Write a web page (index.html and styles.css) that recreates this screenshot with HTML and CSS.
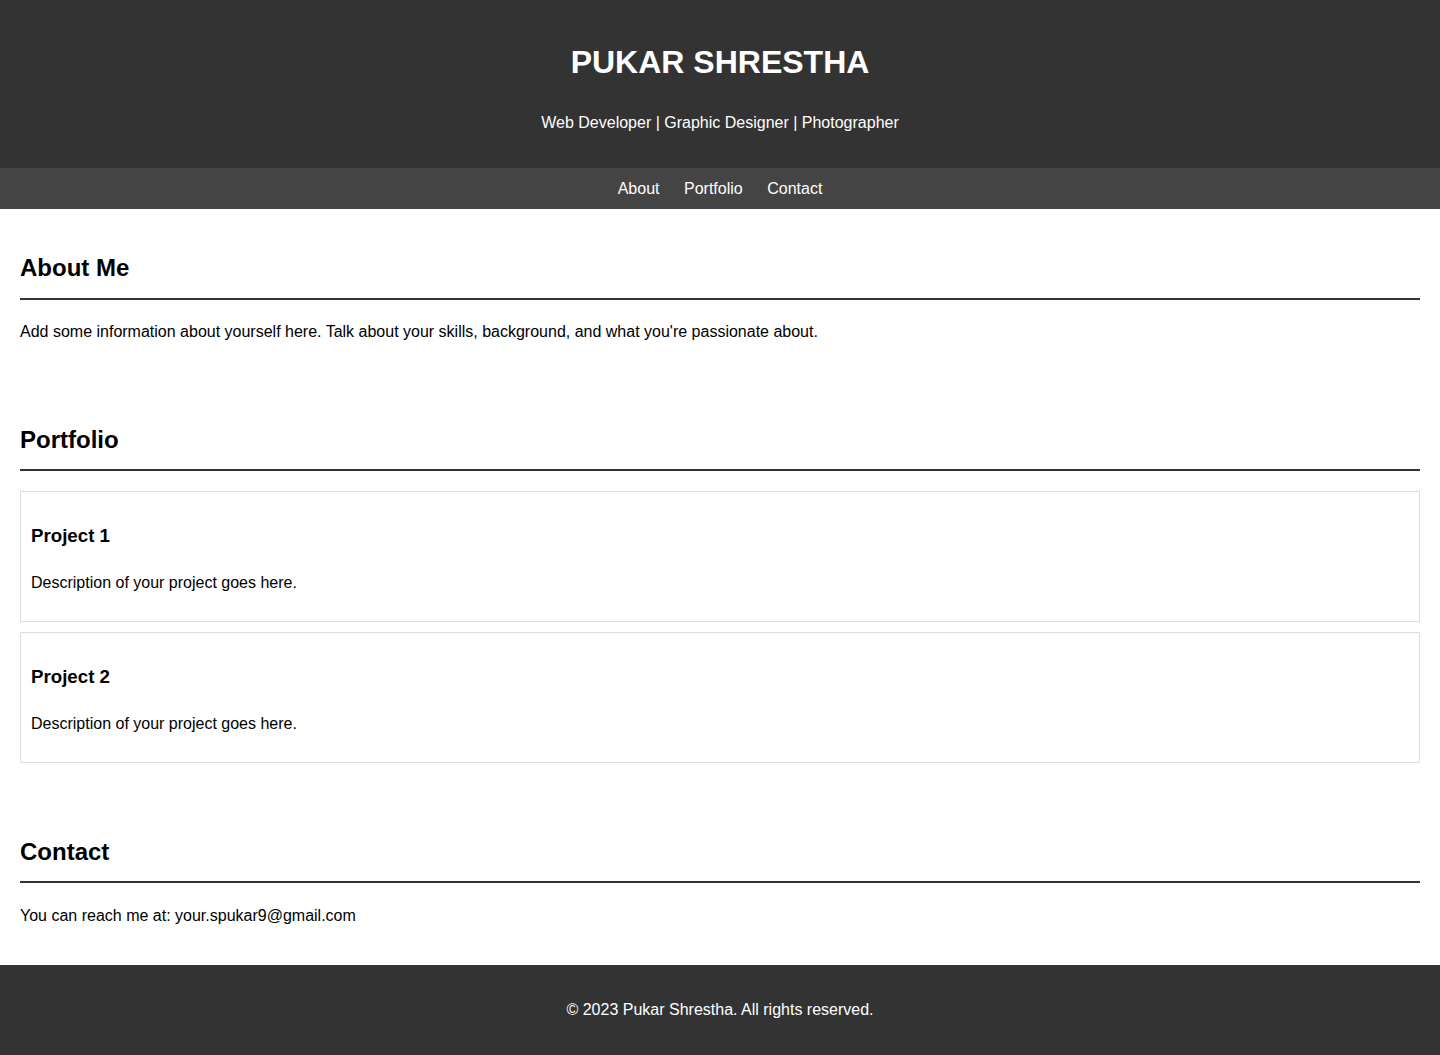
FILE: index.html
```html
<!DOCTYPE html>
<html lang="en">
<head>
<meta charset="utf-8">
<title>Pukar Shrestha</title>
<link rel="stylesheet" href="styles.css">
</head>
<body>
<header class="site-header">
  <h1 class="site-title">PUKAR SHRESTHA</h1>
  <p class="site-tagline">Web Developer | Graphic Designer | Photographer</p>
</header>
<nav class="site-nav">
  <a href="#about">About</a>
  <a href="#portfolio">Portfolio</a>
  <a href="#contact">Contact</a>
</nav>
<main>
  <section class="section" id="about">
    <h2 class="section-title">About Me</h2>
    <p>Add some information about yourself here. Talk about your skills, background, and what you're passionate about.</p>
  </section>
  <section class="section" id="portfolio">
    <h2 class="section-title">Portfolio</h2>
    <div class="project">
      <h3>Project 1</h3>
      <p>Description of your project goes here.</p>
    </div>
    <div class="project">
      <h3>Project 2</h3>
      <p>Description of your project goes here.</p>
    </div>
  </section>
  <section class="section" id="contact">
    <h2 class="section-title">Contact</h2>
    <p>You can reach me at: your.spukar9@gmail.com</p>
  </section>
</main>
<footer class="site-footer">
  <p>&copy; 2023 Pukar Shrestha. All rights reserved.</p>
</footer>
</body>
</html>
```

FILE: styles.css
```css
body {
  margin: 0;
  font-family: "Liberation Sans", Arial, sans-serif;
  font-size: 16px;
  line-height: 1.6;
  color: #000;
  background: #fff;
}
.site-header {
  background: #333;
  color: #fff;
  text-align: center;
  padding: 16px;
}
.site-title {
  font-size: 32px;
  margin: 21.44px 0;
}
.site-tagline {
  margin: 16px 0;
}
.site-nav {
  background: #444;
  display: flex;
  justify-content: center;
  gap: 24.5px;
  padding: 8px 0;
}
.site-nav a {
  color: #fff;
  text-decoration: none;
}
.section {
  padding: 20px;
}
.section-title {
  font-size: 24px;
  margin: 19.92px 0;
  padding-bottom: 10px;
  border-bottom: 2px solid #333;
}
.project {
  border: 1px solid #ddd;
  padding: 10px;
  margin-bottom: 10px;
}
.project h3 {
  font-size: 18.72px;
  margin: 18.72px 0;
}
.site-footer {
  background: #333;
  color: #fff;
  text-align: center;
  padding: 16px;
}
.site-footer p {
  margin: 16px 0;
}
```
